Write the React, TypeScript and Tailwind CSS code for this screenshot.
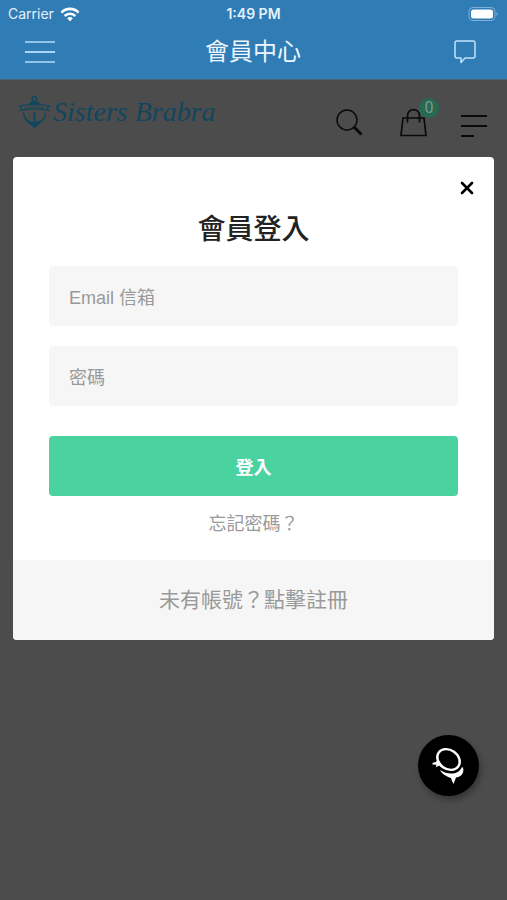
import { useState } from 'react';

const fontStack = "font-['Liberation_Sans','Noto_Sans_CJK_TC',sans-serif]";

function StatusBar() {
  return (
    <div className="grid h-7 grid-cols-3 items-center px-2 font-[Inter,sans-serif] text-sm text-[#e4f1fb]">
      <div className="flex items-center gap-1.5">
        <span>Carrier</span>
        <svg width="20" height="15" viewBox="0 0 18 14" fill="none" stroke="#fff" strokeWidth="2.4" aria-hidden="true">
          <path d="M1 5.2C5.5.6 12.5.6 17 5.2" />
          <path d="M4 8.4c2.8-2.800 7.200-2.800 10 0" />
          <path d="M6.400 10.400 9 13.500l2.600-3.100c-1.500-1.300-3.700-1.300-5.200 0Z" fill="#fff" stroke="none" />
        </svg>
      </div>
      <span className="text-center font-semibold">1:49 PM</span>
      <svg className="justify-self-end" width="31" height="14" viewBox="0 0 31 14" aria-hidden="true">
        <rect x="1" y="0.5" width="26" height="13" rx="4" fill="none" stroke="#7fb0d8" />
        <rect x="3" y="2.5" width="22" height="9" rx="2.5" fill="#fff" />
        <path d="M28.500 5v4c1.600-.6 1.600-3.400 0-4Z" fill="#7fb0d8" />
      </svg>
    </div>
  );
}

function AppBar() {
  return (
    <header className="border-b border-[#48637a] bg-[#307cb5]">
      <StatusBar />
      <div className="flex h-[51px] items-center justify-between pb-1 pl-[25px] pr-7">
        <button type="button" aria-label="選單" className="flex w-[30px] flex-col gap-2 py-1">
          <span className="h-0.5 bg-[#8fc4ec]" />
          <span className="h-0.5 bg-[#a9d5f7]" />
          <span className="h-0.5 bg-[#8fc4ec]" />
        </button>
        <h1 className="text-2xl text-[#eef7ff]">會員中心</h1>
        <button type="button" aria-label="訊息">
          <svg width="28" height="26" viewBox="0 0 28 26" fill="none" stroke="#c3e2fa" strokeWidth="1.5" strokeLinejoin="round" aria-hidden="true">
            <path d="M6 2h16a2 2 0 0 1 2 2v13a2 2 0 0 1-2 2h-8l-4 4.500V19H6a2 2 0 0 1-2-2V4a2 2 0 0 1 2-2Z" />
          </svg>
        </button>
      </div>
    </header>
  );
}

function Logo() {
  return (
    <a href="#" className="flex items-center gap-0.5 text-[#12465e]">
      <svg width="33" height="34" viewBox="0 0 33 34" fill="none" stroke="currentColor" aria-hidden="true">
        <circle cx="16.5" cy="4" r="2.4" strokeWidth="1.5" />
        <path d="M11.500 8h10M16.500 6.500v4" strokeWidth="1.800" />
        <path d="M1 11c10-1.800 21-1.800 31 0l-3 2 2 2.500c-9-2-20-2-29 0l2-2.500Z" strokeWidth="1.100" />
        <path d="M6 13.200c7-1.200 14-1.200 21 0" strokeWidth="1.200" strokeDasharray="2 1" />
        <path d="M16.500 17v12" strokeWidth="2" />
        <path d="M5.500 17.500c.2 6.500 4 9 11 14.500 7-5.500 10.800-8 11-14.500" strokeWidth="1.400" />
        <path d="M6 21c3 4.500 7 6 10.500 6s7.500-1.500 10.500-6c-1 5-5 7.500-10.500 11.500C11 28.500 7 26 6 21Z" fill="currentColor" stroke="none" />
      </svg>
      <span className="font-['Liberation_Serif',serif] text-[28px] italic leading-8">Sisters Brabra</span>
    </a>
  );
}

function SiteHeader() {
  return (
    <div className="flex h-[77px] items-start justify-between pl-[18px] pr-5 pt-[15px]">
      <Logo />
      <div className="flex items-start text-[#0a0a0a]">
        <button type="button" aria-label="搜尋" className="mr-[37px] mt-[14px]">
          <svg width="27" height="27" viewBox="0 0 27 27" fill="none" stroke="currentColor" aria-hidden="true">
            <circle cx="11" cy="11" r="10" strokeWidth="1.5" />
            <path d="m18 18 7.500 7.500" strokeWidth="3" />
          </svg>
        </button>
        <button type="button" aria-label="購物車" className="relative mr-[34px] mt-[13px]">
          <svg width="27" height="29" viewBox="0 0 27 29" fill="none" stroke="currentColor" strokeWidth="1.7" aria-hidden="true">
            <path d="M3 10h21l2 17.500H1Z" />
            <path d="M7.500 14.500V8c0-8.500 12-8.500 12 0v6.500" />
          </svg>
          <span className="absolute -right-3 -top-2.5 flex size-5 items-center justify-center rounded-full bg-[#266a52] font-[Roboto,sans-serif] text-base text-[#7d988f]">
            0
          </span>
        </button>
        <button type="button" aria-label="分類" className="mt-5 flex flex-col gap-2">
          <span className="h-0.5 w-[26px] bg-current" />
          <span className="h-0.5 w-[26px] bg-current" />
          <span className="h-0.5 w-[13px] bg-current" />
        </button>
      </div>
    </div>
  );
}

const inputClass =
  'h-[60px] w-full rounded bg-[#f6f6f6] px-5 pt-1 text-lg text-[#333] outline-none placeholder:text-[#999]';

function LoginDialog({ onClose }: { onClose: () => void }) {
  const [email, setEmail] = useState('');
  const [password, setPassword] = useState('');

  return (
    <section role="dialog" aria-labelledby="login-title" className="mx-[13px] overflow-hidden rounded bg-white">
      <div className="flex justify-end px-5 pt-6">
        <button type="button" aria-label="關閉" onClick={onClose}>
          <svg width="14" height="14" viewBox="0 0 14 14" stroke="#000" strokeWidth="2.6" strokeLinecap="round" aria-hidden="true">
            <path d="m2 2 10 10M12 2 2 12" />
          </svg>
        </button>
      </div>
      <form className="flex flex-col px-9" onSubmit={(e) => e.preventDefault()}>
        <h2 id="login-title" className="mb-4 mt-[15px] text-center text-[28px] font-medium leading-10 text-[#222]">
          會員登入
        </h2>
        <input
          type="email"
          aria-label="Email 信箱"
          placeholder="Email 信箱"
          value={email}
          onChange={(e) => setEmail(e.target.value)}
          className={inputClass}
        />
        <input
          type="password"
          aria-label="密碼"
          placeholder="密碼"
          value={password}
          onChange={(e) => setPassword(e.target.value)}
          className={`mt-5 ${inputClass}`}
        />
        <button type="submit" className="mt-[30px] h-[60px] rounded bg-[#4bd2a1] pt-1 text-lg font-bold text-white">
          登入
        </button>
        <a href="#" className="mb-[22px] mt-[14px] self-center text-lg leading-7 text-[#999]">忘記密碼？</a>
      </form>
      <div className="flex h-20 items-center justify-center bg-[#f6f6f6]">
        <a href="#" className="text-[21px] leading-8 text-[#999]">未有帳號？點擊註冊</a>
      </div>
    </section>
  );
}

function ChatButton() {
  return (
    <button
      type="button"
      aria-label="線上客服"
      className="fixed bottom-[104px] right-7 flex size-[61px] items-center justify-center rounded-full bg-black shadow-[2px_4px_6px_rgba(0,0,0,0.3)]"
    >
      <svg width="36" height="40" viewBox="0 0 36 40" fill="none" aria-hidden="true">
        <ellipse cx="17.5" cy="13.5" rx="12" ry="9.5" transform="rotate(35 17.5 13.5)" stroke="#fff" strokeWidth="2.4" />
        <path d="M6.500 12.500c.2 2-.8 3.500-5 4.500v1.500l4 .2-.8 2.500 6-2.700Z" fill="#fff" />
        <path d="M9 24c8 5 18 5.500 22-3 1.600.5 1.700 3 1 5.500-1 3-3.700 4.500-7 5l-2.500 6.500c-1.200-2-2-4-2.500-6-4.500-1.500-9-4-11-8Z" fill="#fff" />
      </svg>
    </button>
  );
}

export default function App() {
  const [open, setOpen] = useState(true);

  return (
    <div className={`min-h-screen bg-[#4c4c4c] ${fontStack}`}>
      <AppBar />
      <SiteHeader />
      {open && <LoginDialog onClose={() => setOpen(false)} />}
      <ChatButton />
    </div>
  );
}
